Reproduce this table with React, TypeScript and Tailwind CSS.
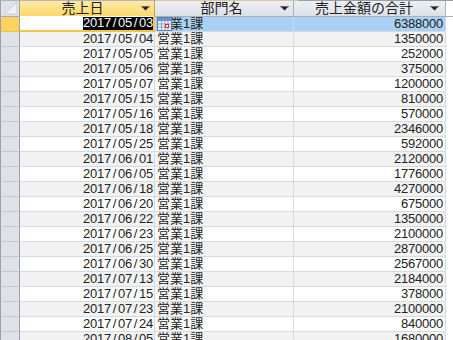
import React from "react";

const rows: [string, string][] = [
  ["2017/05/03", "6388000"],
  ["2017/05/04", "1350000"],
  ["2017/05/05", "252000"],
  ["2017/05/06", "375000"],
  ["2017/05/07", "1200000"],
  ["2017/05/15", "810000"],
  ["2017/05/16", "570000"],
  ["2017/05/18", "2346000"],
  ["2017/05/25", "592000"],
  ["2017/06/01", "2120000"],
  ["2017/06/05", "1776000"],
  ["2017/06/18", "4270000"],
  ["2017/06/20", "675000"],
  ["2017/06/22", "1350000"],
  ["2017/06/23", "2100000"],
  ["2017/06/25", "2870000"],
  ["2017/06/30", "2567000"],
  ["2017/07/13", "2184000"],
  ["2017/07/15", "378000"],
  ["2017/07/23", "2100000"],
  ["2017/07/24", "840000"],
  ["2017/08/05", "1680000"],
];

function Half({ text }: { text: string }) {
  return (
    <span className="flex [font-family:'Liberation_Sans',Arial,sans-serif] text-[13px] leading-[14px]">
      {text.split("").map((c, i) => (
        <span key={i} className="inline-block w-[7px] text-center">
          {c}
        </span>
      ))}
    </span>
  );
}

function Arrow() {
  return (
    <svg width="9" height="5" viewBox="0 0 9 5" className="shrink-0">
      <rect x="0" y="0" width="9" height="1" fill="#6b6b6b" />
      <path d="M1 1 H8 L4.5 4.5 Z" fill="#222" />
    </svg>
  );
}

function CalendarIcon() {
  return (
    <svg width="15" height="14" viewBox="0 0 15 14" className="absolute left-[2px] top-[0px]">
      <rect x="0.5" y="0.5" width="14" height="13" fill="#eef3fa" stroke="#5b7fb5" />
      <rect x="1" y="1" width="13" height="3" fill="#6f93c8" />
      <path d="M1 7 H14 M1 10 H14 M4.5 4 V13.5 M8 4 V13.5 M11 4 V13.5" stroke="#8aa6cf" strokeWidth="1" />
      <rect x="8.5" y="7.5" width="3" height="3" fill="#fff" stroke="#e03020" />
    </svg>
  );
}

const jp = "[font-family:'Liberation_Sans','Noto_Sans_CJK_JP',sans-serif]";

export default function App() {
  return (
    <div className={"w-[453px] h-[340px] overflow-hidden bg-white relative text-[#222] " + jp}>
      {/* top strip */}
      <div className="flex h-[1px]">
        <div className="w-[155px] bg-[#b4b4b4]" />
        <div className="w-[143px] bg-[#d8c8a2]" />
        <div className="flex-1 bg-[#9aa0a8]" />
      </div>
      {/* header */}
      <div className="flex h-[16px] border-b border-[#a9b0b9]">
        <div className="w-[20px] shrink-0 border-l border-r border-[#9aa0a8] bg-[#dfe3e8] relative overflow-hidden">
          <svg width="19" height="15" className="absolute left-0 top-0">
            <path d="M3 13 L16 1 L16 13 Z" fill="#eef0f3" stroke="#c8ccd2" strokeWidth="1" />
          </svg>
        </div>
        <div className="w-[135px] shrink-0 border-r border-[#c9a646] bg-gradient-to-b from-[#fdeaa6] to-[#fad867] flex items-center pr-[4px]">
          <span className="flex-1 text-center text-[14px] leading-[15px] pl-[4px]">売上日</span>
          <Arrow />
        </div>
        <div className="w-[139px] shrink-0 border-r border-[#aab2bd] bg-gradient-to-b from-[#eceff3] to-[#dde1e7] flex items-center pr-[4px]">
          <span className="flex-1 text-center text-[14px] leading-[15px] pl-[8px]">部門名</span>
          <Arrow />
        </div>
        <div className="w-[152px] shrink-0 border-r border-[#aab2bd] bg-gradient-to-b from-[#eceff3] to-[#dde1e7] flex items-center pr-[6px]">
          <span className="flex-1 text-center text-[14px] leading-[15px] pl-[4px]">売上金額の合計</span>
          <Arrow />
        </div>
        <div className="flex-1 bg-white" />
      </div>
      {/* rows */}
      {rows.map(([d, v], i) => {
        const sel = i === 0;
        const alt = i % 2 === 1;
        const bg = sel ? "bg-[#a9d0f5]" : alt ? "bg-[#f2f2f2]" : "bg-white";
        return (
          <div key={i} className="flex h-[15px]">
            <div
              className={
                "w-[20px] shrink-0 border-l border-r border-[#9aa0a8] border-b " +
                (sel ? "bg-[#fbd35e] border-b-[#e9c14f]" : "bg-[#dfe3e8] border-b-[#c3c8cf]")
              }
            />
            <div
              className={
                "w-[135px] shrink-0 flex items-center justify-end " +
                (sel
                  ? "bg-white border-r-2 border-b-2 border-[#f3c649] -mt-[1px] h-[16px]"
                  : bg + " border-r border-b border-[#d3dbe6]")
              }
            >
              {sel ? (
                <span className="bg-black text-white h-[13px] flex items-center">
                  <Half text={d} />
                </span>
              ) : (
                <span className="pr-[1px]">
                  <Half text={d} />
                </span>
              )}
            </div>
            <div
              className={
                "w-[139px] shrink-0 relative flex items-center pl-[2px] text-[13px] leading-[14px] border-r border-b border-[#d3dbe6] " +
                bg
              }
            >
              {sel && <CalendarIcon />}
              <span>営業1課</span>
            </div>
            <div
              className={
                "w-[152px] shrink-0 flex items-center justify-end pr-[2px] border-r border-b border-[#d3dbe6] " +
                bg
              }
            >
              <Half text={v} />
            </div>
            <div className="flex-1 bg-white" />
          </div>
        );
      })}
    </div>
  );
}
